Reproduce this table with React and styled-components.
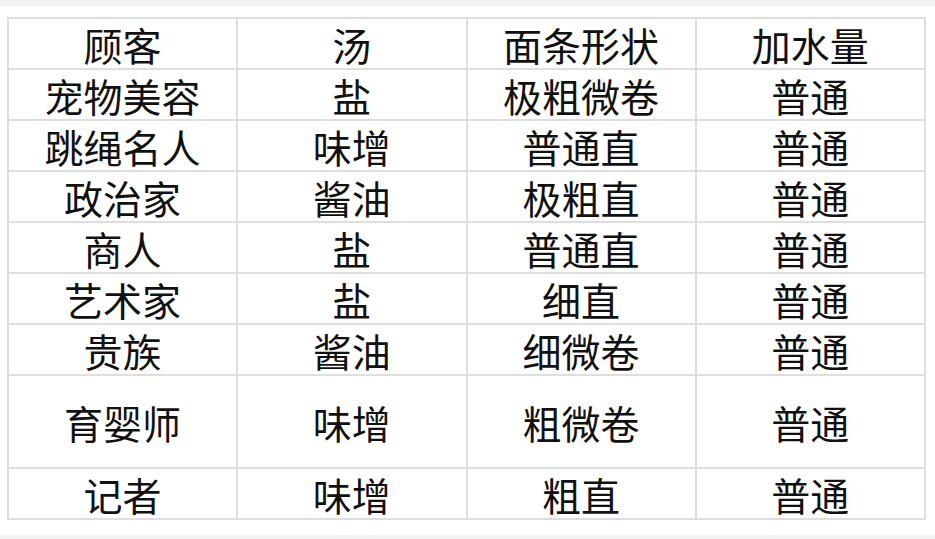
import React from "react";
import styled, { createGlobalStyle } from "styled-components";

const Global = createGlobalStyle`
  html, body { margin: 0; padding: 0; background: #f3f3f3; }
  body { font-family: "Noto Sans CJK SC", "Noto Sans", sans-serif; }
`;

const Sheet = styled.div`
  background: #ffffff;
  margin-top: 6px;
  height: 529px;
  box-sizing: border-box;
  padding: 11px 9px 0 7px;
`;

const Grid = styled.div`
  display: grid;
  grid-template-columns: repeat(4, 1fr);
  grid-template-rows: repeat(7, 51px) 93px 51px;
  border-left: 2px solid #dedede;
  border-top: 2px solid #dedede;
`;

const Cell = styled.div`
  display: flex;
  align-items: center;
  justify-content: center;
  border-right: 2px solid #dedede;
  border-bottom: 2px solid #dedede;
  font-size: 39px;
  line-height: 1;
  color: #111111;
  padding-top: 1px;
  box-sizing: border-box;
`;

const rows = [
  ["顾客", "汤", "面条形状", "加水量"],
  ["宠物美容", "盐", "极粗微卷", "普通"],
  ["跳绳名人", "味增", "普通直", "普通"],
  ["政治家", "酱油", "极粗直", "普通"],
  ["商人", "盐", "普通直", "普通"],
  ["艺术家", "盐", "细直", "普通"],
  ["贵族", "酱油", "细微卷", "普通"],
  ["育婴师", "味增", "粗微卷", "普通"],
  ["记者", "味增", "粗直", "普通"],
];

export default function App() {
  return (
    <>
      <Global />
      <Sheet>
        <Grid>
          {rows.map((r, i) =>
            r.map((c, j) => <Cell key={`${i}-${j}`}>{c}</Cell>)
          )}
        </Grid>
      </Sheet>
    </>
  );
}
